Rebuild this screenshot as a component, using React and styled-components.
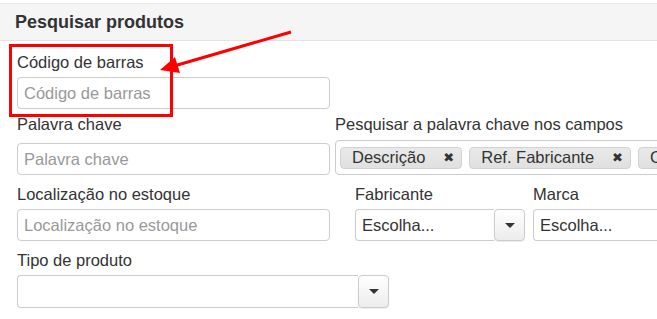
import React from 'react'
import styled, { createGlobalStyle } from 'styled-components'

const GlobalStyle = createGlobalStyle`
    body {
        margin: 0;
        background: #fff;
        font-family: "Liberation Sans", Arial, sans-serif;
        color: #333;
    }
`

const App = () => {
    return (
        <Page>
            <GlobalStyle />
            <Header>Pesquisar produtos</Header>
            <Form>
                <Row space={4}>
                    <Field width={313}>
                        <Label>Código de barras</Label>
                        <TextInput placeholder="Código de barras" />
                    </Field>
                </Row>
                <Row labelSpace={8}>
                    <Field width={313}>
                        <Label>Palavra chave</Label>
                        <TextInput placeholder="Palavra chave" />
                    </Field>
                    <Field width={340} gap={5}>
                        <Label>Pesquisar a palavra chave nos campos</Label>
                        <MultiBox>
                            <Tag>Descrição<TagClose>✖</TagClose></Tag>
                            <Tag>Ref. Fabricante<TagClose>✖</TagClose></Tag>
                            <Tag>Código<TagClose>✖</TagClose></Tag>
                        </MultiBox>
                    </Field>
                </Row>
                <Row>
                    <Field width={313}>
                        <Label>Localização no estoque</Label>
                        <TextInput placeholder="Localização no estoque" />
                    </Field>
                    <Field width={170} gap={25}>
                        <Label>Fabricante</Label>
                        <Select>
                            <SelectValue>Escolha...</SelectValue>
                            <SelectButton><Caret /></SelectButton>
                        </Select>
                    </Field>
                    <Field width={170} gap={8}>
                        <Label>Marca</Label>
                        <Select>
                            <SelectValue>Escolha...</SelectValue>
                            <SelectButton><Caret /></SelectButton>
                        </Select>
                    </Field>
                </Row>
                <Row>
                    <Field width={372}>
                        <Label>Tipo de produto</Label>
                        <Select tall>
                            <SelectValue />
                            <SelectButton><Caret /></SelectButton>
                        </Select>
                    </Field>
                </Row>
            </Form>

            {/* annotation over the form */}
            <Highlight />
            <Arrow width="657" height="319" viewBox="0 0 657 319">
                <line x1="291" y1="32" x2="174" y2="66" stroke="#f00" strokeWidth="3" />
                <polygon points="160,70 175,57 180,73" fill="#f00" />
            </Arrow>
        </Page>
    )
}

export default App

const Page = styled.div`
    position: relative;
    width: 657px;
    height: 319px;
    overflow: hidden;
`

const Header = styled.div`
    margin-top: 3px;
    height: 36px;
    line-height: 36px;
    padding-left: 15px;
    background: #f5f5f5;
    border-top: 1px solid #e9e9e9;
    border-bottom: 1px solid #e3e3e3;
    font-size: 18px;
    font-weight: bold;
    color: #333;
`

const Form = styled.div`
    padding: 10px 0 0 17px;
`

const Label = styled.label`
    display: block;
    font-size: 16.5px;
    line-height: 22px;
    color: #333;
    margin-bottom: 4px;
    white-space: nowrap;
`

const Row = styled.div`
    display: flex;
    margin-bottom: ${p => (p.space != null ? p.space : 8)}px;

    ${Label} {
        margin-bottom: ${p => p.labelSpace || 4}px;
    }
`

const Field = styled.div`
    flex: 0 0 auto;
    width: ${p => p.width}px;
    margin-left: ${p => p.gap || 0}px;
    display: flex;
    flex-direction: column;
`

const TextInput = styled.input`
    box-sizing: border-box;
    width: 100%;
    height: 32px;
    padding: 0 6px;
    border: 1px solid #ccc;
    border-radius: 4px;
    font-family: "Liberation Sans", Arial, sans-serif;
    font-size: 16.5px;
    color: #333;
    outline: none;
    &::placeholder {
        color: #999;
    }
`

const MultiBox = styled.div`
    box-sizing: border-box;
    height: 35px;
    display: flex;
    align-items: center;
    gap: 7px;
    padding: 0 4px;
    border: 1px solid #ccc;
    border-radius: 4px;
    white-space: nowrap;
    margin-top: -3px;
`

const Tag = styled.span`
    box-sizing: border-box;
    height: 22px;
    display: inline-flex;
    align-items: center;
    padding: 0 7px 0 11px;
    background: linear-gradient(#eaeaea, #e0e0e0);
    border: 1px solid #d2d2d2;
    border-radius: 4px;
    font-size: 16.5px;
    color: #333;
`

const TagClose = styled.span`
    margin-left: 18px;
    font-family: "DejaVu Sans", sans-serif;
    font-size: 13px;
    line-height: 1;
    color: #333;
`

const Select = styled.div`
    display: flex;
    height: ${p => (p.tall ? 33 : 32)}px;
`

const SelectValue = styled.div`
    box-sizing: border-box;
    flex: 1;
    padding-left: 6px;
    border: 1px solid #ccc;
    border-right: none;
    border-radius: 4px 0 0 4px;
    font-size: 16.5px;
    line-height: 30px;
    color: #333;
    white-space: nowrap;
    overflow: hidden;
`

const SelectButton = styled.div`
    box-sizing: border-box;
    width: 31px;
    display: flex;
    align-items: center;
    justify-content: center;
    border: 1px solid #ccc;
    border-radius: 4px;
    background: linear-gradient(#ffffff, #ececec);
    box-shadow: 0 1px 1px rgba(0, 0, 0, 0.08);
`

const Caret = styled.span`
    width: 0;
    height: 0;
    border-left: 5px solid transparent;
    border-right: 5px solid transparent;
    border-top: 5px solid #333;
`

const Highlight = styled.div`
    position: absolute;
    left: 9px;
    top: 44px;
    width: 158px;
    height: 67px;
    border: 3px solid #f00;
    pointer-events: none;
`

const Arrow = styled.svg`
    position: absolute;
    left: 0;
    top: 0;
    pointer-events: none;
`
